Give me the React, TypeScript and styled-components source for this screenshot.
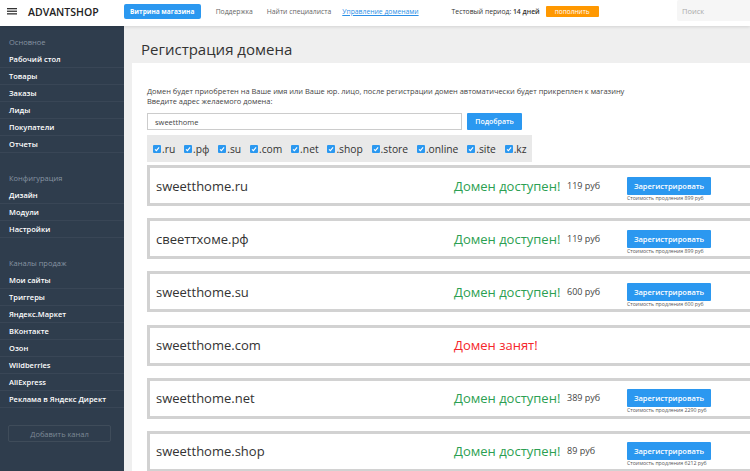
import styled, { createGlobalStyle } from "styled-components";

const GlobalStyle = createGlobalStyle`
  * { box-sizing: border-box; }
  html, body { margin: 0; padding: 0; }
  body {
    font-family: "Open Sans", "Liberation Sans", sans-serif;
    color: #333;
    background: #efefef;
  }
`;

type Domain = {
  name: string;
  free: boolean;
  price?: number;
  renew?: number;
};

const domains: Domain[] = [
  { name: "sweetthome.ru", free: true, price: 119, renew: 899 },
  { name: "свееттхоме.рф", free: true, price: 119, renew: 899 },
  { name: "sweetthome.su", free: true, price: 600, renew: 600 },
  { name: "sweetthome.com", free: false },
  { name: "sweetthome.net", free: true, price: 389, renew: 2290 },
  { name: "sweetthome.shop", free: true, price: 89, renew: 6212 },
];

const zones = [".ru", ".рф", ".su", ".com", ".net", ".shop", ".store", ".online", ".site", ".kz"];

const menu = [
  { title: "Основное", items: ["Рабочий стол", "Товары", "Заказы", "Лиды", "Покупатели", "Отчеты"] },
  { title: "Конфигурация", items: ["Дизайн", "Модули", "Настройки"] },
  {
    title: "Каналы продаж",
    items: ["Мои сайты", "Триггеры", "Яндекс.Маркет", "ВКонтакте", "Озон", "Wildberries", "AliExpress", "Реклама в Яндекс Директ"],
  },
];

export default function App() {
  return (
    <>
      <GlobalStyle />
      <Page>
        <TopBar>
          <Burger viewBox="0 0 10 7">
            <rect x="0" y="0" width="10" height="1.3" fill="#333" />
            <rect x="0" y="2.6" width="10" height="1.3" fill="#333" />
            <rect x="0" y="5.2" width="10" height="1.3" fill="#333" />
          </Burger>
          <Logo>ADVANTSHOP</Logo>
          <StoreButton>Витрина магазина</StoreButton>
          <NavLink $gap={15}>Поддержка</NavLink>
          <NavLink $gap={14}>Найти специалиста</NavLink>
          <NavLink $gap={11} $active>
            Управление доменами
          </NavLink>
          <Trial>
            Тестовый период: <b>14 дней</b>
          </Trial>
          <TopUp>пополнить</TopUp>
          <Search>Поиск</Search>
        </TopBar>
        <Body>
          <Sidebar>
            {menu.map((group) => (
              <Group key={group.title}>
                <GroupTitle>{group.title}</GroupTitle>
                {group.items.map((item) => (
                  <MenuItem key={item}>{item}</MenuItem>
                ))}
              </Group>
            ))}
            <AddChannel>Добавить канал</AddChannel>
          </Sidebar>
          <Main>
            <Title>Регистрация домена</Title>
            <Panel>
              <Description>
                Домен будет приобретен на Ваше имя или Ваше юр. лицо, после регистрации домен автоматически будет
                прикреплен к магазину
                <br />
                Введите адрес желаемого домена:
              </Description>
              <SearchRow>
                <DomainInput>sweetthome</DomainInput>
                <PickButton>Подобрать</PickButton>
              </SearchRow>
              <ZoneBar>
                {zones.map((zone) => (
                  <Zone key={zone}>
                    <Check viewBox="0 0 8 8">
                      <rect width="8" height="8" rx="1" fill="#2b98f0" />
                      <path d="M2 4.3 L3.4 5.7 L6.1 2.4" stroke="#fff" strokeWidth="1.1" fill="none" />
                    </Check>
                    {zone}
                  </Zone>
                ))}
              </ZoneBar>
              <Results>
                {domains.map((d) => (
                  <Card key={d.name}>
                    <DomainName>{d.name}</DomainName>
                    <Status $free={d.free}>{d.free ? "Домен доступен!" : "Домен занят!"}</Status>
                    {d.free && (
                      <>
                        <Price>{d.price} руб</Price>
                        <RegisterCell>
                          <RegisterButton>Зарегистрировать</RegisterButton>
                          <Renew>Стоимость продления {d.renew} руб</Renew>
                        </RegisterCell>
                      </>
                    )}
                  </Card>
                ))}
              </Results>
            </Panel>
          </Main>
        </Body>
      </Page>
    </>
  );
}

const Page = styled.div`
  height: 100vh;
  display: flex;
  flex-direction: column;
  overflow: hidden;
`;

const TopBar = styled.header`
  height: 26px;
  flex: none;
  display: flex;
  align-items: center;
  background: #fff;
  box-shadow: 0 1px 3px rgba(0, 0, 0, 0.12);
  position: relative;
  z-index: 1;
  padding-left: 7px;
`;

const Burger = styled.svg`
  width: 10px;
  height: 7px;
  margin-top: -3px;
`;

const Logo = styled.div`
  margin-left: 11px;
  margin-top: -3px;
  font-size: 10.5px;
  font-weight: 600;
  color: #222;
`;

const StoreButton = styled.div`
  margin-left: 25px;
  margin-top: -3px;
  width: 77px;
  height: 15px;
  border-radius: 2px;
  background: #2b98f0;
  color: #fff;
  font-size: 6.5px;
  font-weight: 700;
  display: flex;
  align-items: center;
  justify-content: center;
`;

const NavLink = styled.div<{ $gap: number; $active?: boolean }>`
  margin-left: ${(p) => p.$gap}px;
  margin-top: -3px;
  font-size: 6.8px;
  color: ${(p) => (p.$active ? "#2b8fe6" : "#666")};
  text-decoration: ${(p) => (p.$active ? "underline" : "none")};
`;

const Trial = styled.div`
  margin-left: 33px;
  margin-top: -3px;
  font-size: 6.8px;
  color: #333;
  b {
    font-weight: 600;
  }
`;

const TopUp = styled.div`
  margin-left: 6px;
  margin-top: -3px;
  width: 53px;
  height: 11px;
  background: #ff9800;
  border-radius: 1px;
  color: #fff;
  font-size: 6.5px;
  display: flex;
  align-items: center;
  justify-content: center;
`;

const Search = styled.div`
  margin-left: auto;
  align-self: flex-start;
  width: 73px;
  height: 21px;
  background: #f6f6f6;
  border-radius: 2px 0 0 2px;
  color: #aaa;
  font-size: 7.5px;
  padding-left: 5px;
  display: flex;
  align-items: center;
`;

const Body = styled.div`
  flex: 1;
  display: flex;
  min-height: 0;
`;

const Sidebar = styled.nav`
  width: 124px;
  flex: none;
  background: #2f3d4d;
  padding-top: 8px;
`;

const Group = styled.div`
  margin-bottom: 17px;
  &:last-of-type {
    margin-bottom: 0;
  }
`;

const GroupTitle = styled.div`
  height: 17px;
  line-height: 17px;
  padding-left: 9px;
  font-size: 7.5px;
  color: #8794a2;
`;

const MenuItem = styled.div`
  height: 17px;
  line-height: 17px;
  padding-left: 9px;
  font-size: 7.5px;
  font-weight: 600;
  color: #fff;
  border-bottom: 1px solid rgba(255, 255, 255, 0.05);
`;

const AddChannel = styled.div`
  margin: 13px 13px 0 8px;
  height: 17px;
  border: 1px solid rgba(255, 255, 255, 0.08);
  border-radius: 2px;
  display: flex;
  align-items: center;
  justify-content: center;
  font-size: 7.5px;
  color: #7d8996;
`;

const Main = styled.main`
  flex: 1;
  display: flex;
  flex-direction: column;
  min-width: 0;
`;

const Title = styled.h1`
  margin: 0;
  height: 37px;
  padding: 13px 0 0 17px;
  font-size: 15px;
  line-height: 20px;
  font-weight: 400;
  color: #333;
`;

const Panel = styled.section`
  flex: 1;
  margin-left: 8px;
  background: #fff;
  padding: 23px 0 0 15px;
  overflow: hidden;
`;

const Description = styled.p`
  margin: 0;
  font-size: 7.45px;
  line-height: 10px;
  color: #444;
  white-space: nowrap;
`;

const SearchRow = styled.div`
  display: flex;
  gap: 5px;
  margin-top: 7px;
`;

const DomainInput = styled.div`
  width: 315px;
  height: 17px;
  border: 1px solid #ccc;
  font-size: 7.5px;
  color: #444;
  padding-left: 7px;
  display: flex;
  align-items: center;
`;

const PickButton = styled.div`
  width: 55px;
  height: 17px;
  background: #2b98f0;
  border-radius: 1px;
  color: #fff;
  font-size: 7px;
  font-weight: 600;
  display: flex;
  align-items: center;
  justify-content: center;
`;

const ZoneBar = styled.div`
  margin-top: 5px;
  width: 385px;
  height: 27px;
  background: #e9e9e9;
  display: flex;
  align-items: center;
  gap: 8.8px;
  padding-left: 6px;
`;

const Zone = styled.div`
  display: flex;
  align-items: center;
  gap: 1px;
  font-size: 10.3px;
  color: #333;
`;

const Check = styled.svg`
  width: 8px;
  height: 8px;
  margin-top: 1px;
`;

const Results = styled.div`
  margin-top: 3px;
  display: flex;
  flex-direction: column;
  gap: 12.2px;
`;

const Card = styled.div`
  width: 640px;
  height: 41px;
  border: 3px solid #d2d2d2;
  background: #fff;
  display: grid;
  grid-template-columns: 298px 113px 60px auto;
  align-items: center;
  padding-left: 6px;
`;

const DomainName = styled.div`
  font-size: 13px;
  color: #333;
`;

const Status = styled.div<{ $free: boolean }>`
  font-size: 13px;
  color: ${(p) => (p.$free ? "#2c9f52" : "#f5262b")};
`;

const Price = styled.div`
  font-size: 9px;
  color: #444;
  margin-top: -1px;
`;

const RegisterCell = styled.div`
  display: flex;
  flex-direction: column;
  align-items: flex-start;
  padding-top: 7px;
`;

const RegisterButton = styled.div`
  width: 84px;
  height: 18px;
  background: #2b98f0;
  border-radius: 1px;
  color: #fff;
  font-size: 7.5px;
  font-weight: 600;
  display: flex;
  align-items: center;
  justify-content: center;
`;

const Renew = styled.div`
  font-size: 5.2px;
  line-height: 7px;
  color: #555;
  white-space: nowrap;
`;
